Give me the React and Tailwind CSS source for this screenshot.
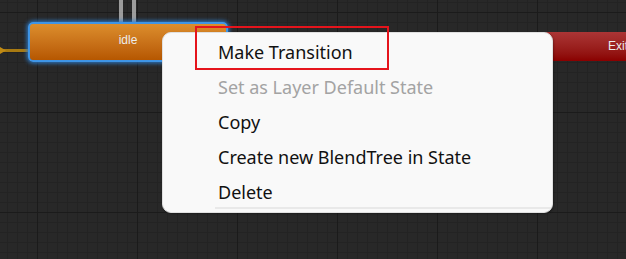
import React from "react";

const items = [
  { label: "Make Transition", disabled: false },
  { label: "Set as Layer Default State", disabled: true },
  { label: "Copy", disabled: false },
  { label: "Create new BlendTree in State", disabled: false },
  { label: "Delete", disabled: false },
];

const StateNode = ({ name, className }) => (
  <div className={className}>
    <span className="text-[12px] text-[#ececec] font-['Liberation_Sans',sans-serif]">{name}</span>
  </div>
);

export default function App() {
  return (
    <div className="relative w-[626px] h-[259px] overflow-hidden bg-[#282828] bg-[linear-gradient(to_right,#1b1b1b_1px,transparent_1px),linear-gradient(to_bottom,#1b1b1b_1px,transparent_1px),linear-gradient(to_right,#232323_1px,transparent_1px),linear-gradient(to_bottom,#232323_1px,transparent_1px)] [background-size:100px_100px,100px_100px,10px_10px,10px_10px] [background-position:37px_12px,37px_12px,7px_2px,7px_2px]">
      {/* transitions coming into idle */}
      <div className="absolute left-[119px] top-0 w-[4px] h-[22px] bg-[#b9b9b9]/80" />
      <div className="absolute left-[132px] top-0 w-[4px] h-[22px] bg-[#b9b9b9]/80" />
      <svg className="absolute left-0 top-[45px]" width="30" height="10" viewBox="0 0 30 10">
        <rect x="0" y="4" width="30" height="3" fill="#a87a12" />
        <polygon points="0,2 6,5.5 0,9" fill="#c08a14" />
      </svg>

      {/* nodes */}
      <StateNode
        name="idle"
        className="absolute left-[28px] top-[22px] w-[200px] h-[40px] rounded-[5px] border-2 border-[#3f95e6] shadow-[0_0_4px_1px_#2f7fd0] bg-gradient-to-b from-[#dc8e2c] to-[#b65700] flex items-start justify-center pt-[7px]"
      />
      <StateNode
        name="Exit"
        className="absolute left-[543px] top-[32px] w-[150px] h-[29px] rounded-[5px] bg-gradient-to-b from-[#ab3535] to-[#8a0000] flex items-start justify-center pt-[5px]"
      />

      {/* context menu */}
      <div className="absolute left-[162px] top-[32px] w-[391px] h-[181px] rounded-[9px] bg-[#f9f9f9] border border-[#e0e0e0] shadow-[1px_1px_2px_rgba(0,0,0,0.25)] overflow-hidden font-['Noto_Sans',sans-serif]">
        <ul className="pt-[2px]">
          {items.map((item, i) => (
            <li
              key={i}
              className={`h-[35px] flex items-center pl-[55px] text-[18px] ${item.disabled ? "text-[#a3a3a3]" : "text-[#111111]"}`}
            >
              {item.label}
            </li>
          ))}
        </ul>
        <div className="absolute left-[52px] right-0 bottom-[3px] h-[2px] bg-[#e9e9e9]" />
      </div>

      {/* highlight box */}
      <div className="absolute left-[195px] top-[26px] w-[194px] h-[44px] border-2 border-[#e5141c]" />
    </div>
  );
}
